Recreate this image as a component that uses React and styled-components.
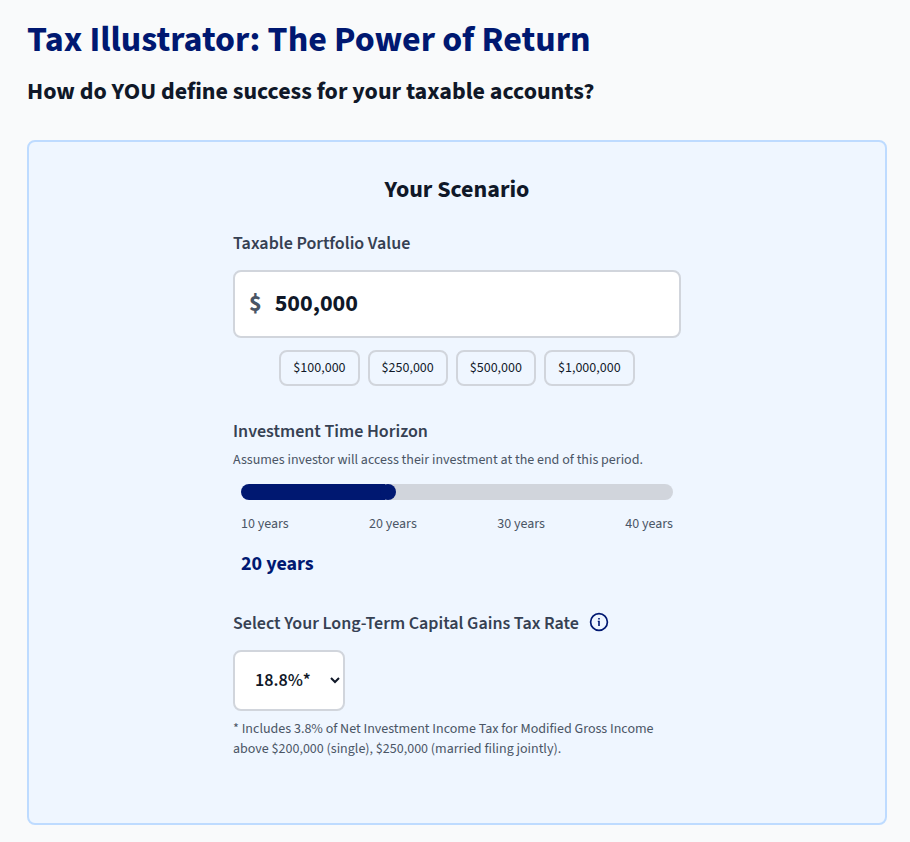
import React, { useState } from "react"
import styled, { createGlobalStyle } from "styled-components"

const navy = "#001871"

const GlobalStyle = createGlobalStyle`
  *,
  *::before,
  *::after {
    box-sizing: border-box;
  }

  body {
    margin: 0;
    background: #f9fafb;
    color: #101828;
    font-family: "Source Sans Pro", "Source Sans 3", "Noto Sans CJK SC", sans-serif;
  }

  h1, h2, h3, p {
    margin: 0;
  }

  button, input, select {
    font-family: inherit;
    color: inherit;
    margin: 0;
  }
`

const Page = styled.main`
  padding: 20px 23px 16px 27px;
`

const Title = styled.h1`
  color: ${navy};
  font-size: 36px;
  font-weight: 700;
  line-height: 40px;
`

const Subtitle = styled.h2`
  margin-top: 16px;
  font-size: 24px;
  font-weight: 700;
  line-height: 32px;
`

const Card = styled.section`
  margin-top: 32px;
  padding: 32px;
  background: #eff6ff;
  border: 2px solid #bedbff;
  border-radius: 8px;
`

const CardTitle = styled.h3`
  font-size: 24px;
  font-weight: 700;
  line-height: 32px;
  text-align: center;
`

const Form = styled.form`
  max-width: 448px;
  margin: 24px auto 32px;
  display: flex;
  flex-direction: column;
  gap: 32px;
`

const Label = styled.label`
  display: block;
  color: #364153;
  font-size: 18px;
  font-weight: 600;
  line-height: 28px;
`

const LabelRow = styled.div`
  display: flex;
  align-items: flex-start;
  gap: 10px;
`

const Hint = styled.p`
  margin-top: ${(props) => props.$gap};
  color: #4a5565;
  font-size: 14px;
  line-height: 20px;
`

const MoneyBox = styled.div`
  display: flex;
  align-items: center;
  gap: 13px;
  height: 68px;
  margin-top: 12px;
  padding: 0 14px;
  background: #fff;
  border: 2px solid #d1d5dc;
  border-radius: 8px;
  font-size: 24px;
  font-weight: 700;
  line-height: 32px;
`

const Currency = styled.span`
  color: #4a5565;
`

const MoneyInput = styled.input`
  flex: 1;
  min-width: 0;
  padding: 0;
  border: 0;
  outline: 0;
  background: transparent;
  font-size: inherit;
  font-weight: inherit;
  line-height: inherit;
`

const Presets = styled.div`
  display: flex;
  justify-content: center;
  flex-wrap: wrap;
  gap: 8px;
  margin-top: 12px;
`

const Preset = styled.button`
  height: 36px;
  padding: 0 12px;
  background: transparent;
  border: 2px solid #d1d5dc;
  border-radius: 8px;
  font-size: 14px;
  line-height: 20px;
  cursor: pointer;
`

const SliderArea = styled.div`
  margin-top: 14px;
  padding: 0 8px;
`

const Slider = styled.input`
  display: block;
  width: 100%;
  height: 16px;
  margin: 0;
  appearance: none;
  border-radius: 8px;
  cursor: pointer;

  &::-webkit-slider-thumb {
    appearance: none;
    width: 16px;
    height: 16px;
    border-radius: 50%;
    background: ${navy};
  }
`

const Ticks = styled.div`
  display: flex;
  justify-content: space-between;
  margin-top: 14px;
  color: #4a5565;
  font-size: 14px;
  line-height: 20px;
`

const Years = styled.output`
  display: block;
  margin-top: 16px;
  color: ${navy};
  font-size: 20px;
  font-weight: 700;
  line-height: 28px;
`

const InfoButton = styled.button`
  display: flex;
  padding: 2px 0;
  border: 0;
  background: none;
  color: ${navy};
  cursor: pointer;
`

const RateSelect = styled.select`
  display: block;
  width: 112px;
  height: 61px;
  margin-top: 12px;
  padding: 0 0 0 16px;
  background: #fff;
  border: 2px solid #d1d5dc;
  border-radius: 8px;
  font-size: 18px;
  font-weight: 600;
`

const InfoIcon = () => (
  <svg width="20" height="20" viewBox="0 0 20 20" fill="none" aria-hidden="true">
    <circle cx="10" cy="10" r="8.4" stroke="currentColor" strokeWidth="1.7" />
    <path d="M9.2 6h1.6v1.5H9.2z" fill="currentColor" />
    <path d="M8.8 8.8h2V14H9.2V9.9h-.4z" fill="currentColor" />
  </svg>
)

const presets = [100000, 250000, 500000, 1000000]
const ticks = [10, 20, 30, 40]
const rates = ["0%", "15%", "18.8%*", "20%", "23.8%*"]

const format = (value) => value.toLocaleString("en-US")

export default function App() {
  const [amount, setAmount] = useState(500000)
  const [years, setYears] = useState(20)
  const [rate, setRate] = useState("18.8%*")

  const filled = ((years - 10) / 30) * 100

  return (
    <>
      <GlobalStyle />
      <Page>
        <Title>Tax Illustrator: The Power of Return</Title>
        <Subtitle>How do YOU define success for your taxable accounts?</Subtitle>

        <Card>
          <CardTitle>Your Scenario</CardTitle>
          <Form onSubmit={(e) => e.preventDefault()}>
            <div>
              <Label htmlFor="amount">Taxable Portfolio Value</Label>
              <MoneyBox>
                <Currency>$</Currency>
                <MoneyInput
                  id="amount"
                  type="text"
                  inputMode="numeric"
                  value={format(amount)}
                  onChange={(e) => setAmount(Number(e.target.value.replace(/\D/g, "")))}
                />
              </MoneyBox>
              <Presets>
                {presets.map((value) => (
                  <Preset key={value} type="button" onClick={() => setAmount(value)}>
                    ${format(value)}
                  </Preset>
                ))}
              </Presets>
            </div>

            <div>
              <Label htmlFor="years">Investment Time Horizon</Label>
              <Hint $gap="4px">
                Assumes investor will access their investment at the end of this period.
              </Hint>
              <SliderArea>
                <Slider
                  id="years"
                  type="range"
                  min="10"
                  max="40"
                  value={years}
                  onChange={(e) => setYears(Number(e.target.value))}
                  style={{
                    background: `linear-gradient(to right, ${navy} ${filled}%, #d1d5dc ${filled}%)`,
                  }}
                />
                <Ticks>
                  {ticks.map((tick) => (
                    <span key={tick}>{tick} years</span>
                  ))}
                </Ticks>
                <Years htmlFor="years">{years} years</Years>
              </SliderArea>
            </div>

            <div>
              <LabelRow>
                <Label htmlFor="rate">Select Your Long-Term Capital Gains Tax Rate</Label>
                <InfoButton type="button" aria-label="More information">
                  <InfoIcon />
                </InfoButton>
              </LabelRow>
              <RateSelect id="rate" value={rate} onChange={(e) => setRate(e.target.value)}>
                {rates.map((value) => (
                  <option key={value}>{value}</option>
                ))}
              </RateSelect>
              <Hint $gap="8px">
                * Includes 3.8% of Net Investment Income Tax for Modified Gross Income above
                $200,000 (single), $250,000 (married filing jointly).
              </Hint>
            </div>
          </Form>
        </Card>
      </Page>
    </>
  )
}
